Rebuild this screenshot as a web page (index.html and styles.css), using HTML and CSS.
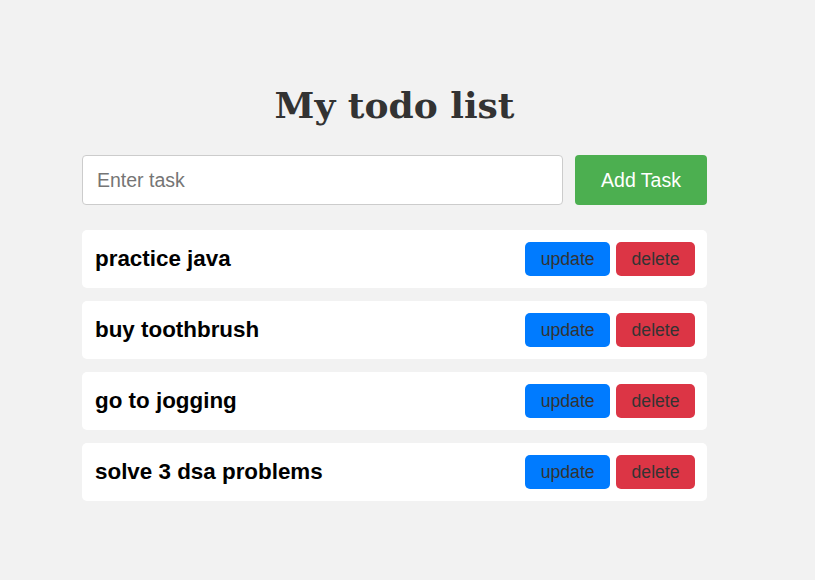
FILE: index.html
```html
<!DOCTYPE html>
<html lang="en">
<head>
<meta charset="utf-8">
<title>My todo list</title>
<link rel="stylesheet" href="styles.css">
</head>
<body>
<div class="container">
  <h1 class="title">My todo list</h1>
  <div class="add-row">
    <input class="task-input" type="text" placeholder="Enter task">
    <button class="add-btn">Add Task</button>
  </div>
  <ul class="task-list">
    <li class="task">
      <span class="task-text">practice java</span>
      <div class="actions"><button class="btn btn-update">update</button><button class="btn btn-delete">delete</button></div>
    </li>
    <li class="task">
      <span class="task-text">buy toothbrush</span>
      <div class="actions"><button class="btn btn-update">update</button><button class="btn btn-delete">delete</button></div>
    </li>
    <li class="task">
      <span class="task-text">go to jogging</span>
      <div class="actions"><button class="btn btn-update">update</button><button class="btn btn-delete">delete</button></div>
    </li>
    <li class="task">
      <span class="task-text">solve 3 dsa problems</span>
      <div class="actions"><button class="btn btn-update">update</button><button class="btn btn-delete">delete</button></div>
    </li>
  </ul>
</div>
</body>
</html>
```

FILE: styles.css
```css
* { box-sizing: border-box; }
html, body {
  margin: 0;
  background: #f2f2f2;
  font-family: "Liberation Sans", Arial, sans-serif;
}
.container {
  width: 625px;
  margin: 0 0 0 82px;
  padding-top: 84px;
}
.title {
  margin: 0 0 28px;
  text-align: center;
  font-family: "DejaVu Serif", Georgia, serif;
  font-weight: bold;
  font-size: 36px;
  line-height: 43px;
  color: #333;
}
.add-row {
  display: flex;
  gap: 12px;
  margin-bottom: 25px;
}
.task-input {
  flex: 1;
  height: 50px;
  border: 1px solid #ccc;
  border-radius: 4px;
  padding: 0 14px;
  font-family: "Liberation Sans", Arial, sans-serif;
  font-size: 19.5px;
  color: #333;
  background: #fff;
  outline: none;
}
.task-input::placeholder { color: #757575; }
.add-btn {
  width: 132px;
  height: 50px;
  border: none;
  border-radius: 4px;
  background: #4caf50;
  color: #fff;
  font-family: "Liberation Sans", Arial, sans-serif;
  font-size: 19.5px;
}
.task-list {
  list-style: none;
  margin: 0;
  padding: 0;
  display: flex;
  flex-direction: column;
  gap: 13px;
}
.task {
  height: 58px;
  background: #fff;
  border-radius: 5px;
  padding: 0 12px 0 13px;
  display: flex;
  align-items: center;
  justify-content: space-between;
}
.task-text {
  font-weight: bold;
  font-size: 22.4px;
  color: #000;
}
.actions {
  display: flex;
  gap: 6px;
}
.btn {
  border: none;
  border-radius: 5px;
  padding: 7px 15.5px;
  height: 34px;
  font-family: "Liberation Sans", Arial, sans-serif;
  font-size: 17.6px;
  color: #333;
}
.btn-update { background: #007bff; }
.btn-delete { background: #dc3545; }
```
